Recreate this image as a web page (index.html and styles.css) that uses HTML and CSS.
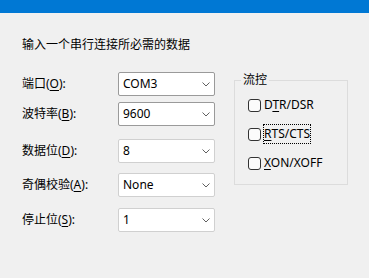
FILE: index.html
```html
<!DOCTYPE html>
<html lang="zh-CN">
<head>
	<meta charset="UTF-8">
	<title>串行连接</title>
	<link rel="stylesheet" href="styles.css">
</head>
<body>
	<div class="titlebar"></div>

	<div class="dialog">
		<p class="intro">输入一个串行连接所必需的数据</p>

		<div class="panel">
			<div class="fields">
				<div class="row">
					<span class="label">端口(<u>O</u>):</span>
					<div class="combo combo-dark"><span>COM3</span><svg width="8" height="5" viewBox="0 0 8 5"><polyline points="0.5,0.5 4,4 7.5,0.5" fill="none" stroke="#606060" stroke-width="1"/></svg></div>
				</div>
				<div class="row row-2">
					<span class="label">波特率(<u>B</u>):</span>
					<div class="combo combo-dark"><span>9600</span><svg width="8" height="5" viewBox="0 0 8 5"><polyline points="0.5,0.5 4,4 7.5,0.5" fill="none" stroke="#606060" stroke-width="1"/></svg></div>
				</div>
				<div class="row row-3">
					<span class="label">数据位(<u>D</u>):</span>
					<div class="combo"><span>8</span><svg width="8" height="5" viewBox="0 0 8 5"><polyline points="0.5,0.5 4,4 7.5,0.5" fill="none" stroke="#606060" stroke-width="1"/></svg></div>
				</div>
				<div class="row row-4">
					<span class="label">奇偶校验(<u>A</u>):</span>
					<div class="combo"><span>None</span><svg width="8" height="5" viewBox="0 0 8 5"><polyline points="0.5,0.5 4,4 7.5,0.5" fill="none" stroke="#606060" stroke-width="1"/></svg></div>
				</div>
				<div class="row row-5">
					<span class="label">停止位(<u>S</u>):</span>
					<div class="combo"><span>1</span><svg width="8" height="5" viewBox="0 0 8 5"><polyline points="0.5,0.5 4,4 7.5,0.5" fill="none" stroke="#606060" stroke-width="1"/></svg></div>
				</div>
			</div>

			<fieldset class="flow">
				<legend>流控</legend>
				<div class="check"><span class="box"></span><span class="text">D<u>T</u>R/DSR</span></div>
				<div class="check"><span class="box"></span><span class="text focus"><u>R</u>TS/CTS</span></div>
				<div class="check"><span class="box"></span><span class="text"><u>X</u>ON/XOFF</span></div>
			</fieldset>
		</div>
	</div>
</body>
</html>
```

FILE: styles.css
```css
body{margin:0;background:#f0f0f0;color:#000;font:12px/16px "Noto Sans","Noto Sans CJK SC",sans-serif;}
u{text-decoration:underline;text-underline-offset:2px;}
.titlebar{height:13px;background:#0078d4;}
.dialog{padding:24px 0 0 22px;}
.intro{margin:0;}
.panel{display:flex;align-items:flex-start;gap:19px;margin-top:19px;}
.fields{width:193px;}
.row{display:flex;align-items:center;height:24px;}
.row-2{margin-top:6px;}
.row-3{margin-top:13px;}
.row-4{margin-top:10px;}
.row-5{margin-top:11px;}
.label{width:96px;}
.combo{display:flex;align-items:center;justify-content:space-between;box-sizing:border-box;width:97px;height:24px;padding:0 4px 0 4px;background:#fff;border:1px solid #d0d0d0;border-radius:2px;}
.combo-dark{border-color:#9a9a9a;}
.combo svg{display:block;margin-right:0;}
.flow{box-sizing:border-box;width:114px;height:113px;margin:0;padding:0 0 0 13px;border:1px solid #dcdcdc;}
.flow legend{margin-left:-7px;padding:0 2px;}
.check{display:flex;align-items:center;height:16px;margin-top:13px;}
.check:first-of-type{margin-top:9px;}
.box{box-sizing:border-box;width:13px;height:13px;margin-right:3px;border:1px solid #333;border-radius:3px;background:#fbfbfb;}
.text{padding:1px 0;}
.focus{outline:1px dotted #000;outline-offset:0;}
```
